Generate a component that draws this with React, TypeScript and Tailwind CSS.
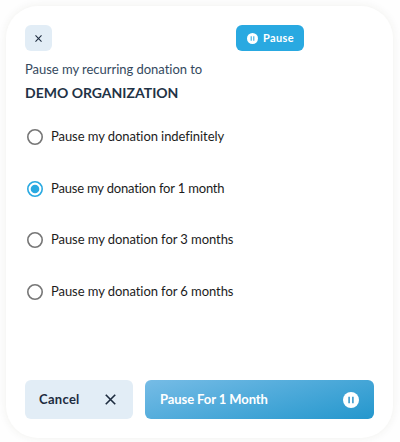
import { useState } from 'react';

import clsx from 'clsx';

type IconProps = {
  className?: string;
};

type PauseOption = {
  value: string;
  label: string;
  action: string;
  labelClass: string;
};

const options: PauseOption[] = [
  {
    value: 'indefinitely',
    label: 'Pause my donation indefinitely',
    action: 'Pause Indefinitely',
    labelClass: 'tracking-[-0.07px]',
  },
  { value: '1', label: 'Pause my donation for 1 month', action: 'Pause For 1 Month', labelClass: 'tracking-[-0.19px]' },
  { value: '3', label: 'Pause my donation for 3 months', action: 'Pause For 3 Months', labelClass: 'tracking-[-0.07px]' },
  { value: '6', label: 'Pause my donation for 6 months', action: 'Pause For 6 Months', labelClass: 'tracking-[-0.07px]' },
];

const CloseIcon = ({ className }: IconProps) => (
  <svg viewBox="0 0 10 10" fill="none" stroke="currentColor" strokeWidth="1.5" className={className}>
    <path d="M.7.7l8.6 8.6M9.3.7L.7 9.3" />
  </svg>
);

const PauseIcon = ({ className }: IconProps) => (
  <svg viewBox="0 0 16 16" className={className}>
    <circle cx="8" cy="8" r="8" fill="#fff" />
    <path d="M6.1 4.8v6.4M9.9 4.8v6.4" stroke="currentColor" strokeWidth="1.5" />
  </svg>
);

const RadioMark = ({ checked }: { checked: boolean }) => (
  <svg viewBox="0 0 16 16" fill="none" className={clsx('size-4', checked ? 'text-[#29a9e1]' : 'text-[#767676]')}>
    <circle cx="8" cy="8" r="7.2" stroke="currentColor" strokeWidth="1.6" />
    {checked && <circle cx="8" cy="8" r="4.3" fill="currentColor" />}
  </svg>
);

export default function App() {
  const [selected, setSelected] = useState('1');
  const current = options.find((option) => option.value === selected) ?? options[0];

  return (
    <main className="h-[442px] w-[400px] overflow-hidden bg-[#fefefe] pt-1.5 pl-1.5 font-['Lato',sans-serif] [font-variant-ligatures:none]">
      <section className="flex h-[432px] w-[387px] flex-col rounded-[32px] bg-white px-[19px] pt-[19px] pb-[19px] shadow-[0_0_10px_rgba(60,50,30,0.07)]">
        <header className="flex h-[26px] shrink-0">
          <button
            type="button"
            aria-label="Close"
            className="flex w-[26.5px] items-center justify-center rounded-md bg-[#e2edf6] text-[#1d2c3f]"
          >
            <CloseIcon className="size-[7px]" />
          </button>
          <button
            type="button"
            className="ml-[184.5px] flex w-[68px] items-center rounded-md bg-[#29a9e1] pl-[11px] text-[11px] font-bold text-white"
          >
            <PauseIcon className="mr-[5px] size-[11px] text-[#29a9e1]" />
            <span className="tracking-[0.35px]">Pause</span>
          </button>
        </header>

        <p className="mt-2 h-5 text-[13px] leading-5 tracking-[-0.03px] whitespace-nowrap text-[#34495e]">
          Pause my recurring donation to
        </p>
        <h1 className="mt-1 h-5 text-[14px] leading-5 font-bold whitespace-nowrap text-[#1f3346]">DEMO ORGANIZATION</h1>

        <div role="radiogroup" className="mt-6 flex flex-col gap-[31.5px]">
          {options.map(({ value, label, labelClass }) => (
            <label key={value} className="flex h-5 cursor-pointer items-center pl-[2px]">
              <input
                type="radio"
                name="pause"
                className="sr-only"
                checked={selected === value}
                onChange={() => setSelected(value)}
              />
              <RadioMark checked={selected === value} />
              <span className={clsx('ml-2 text-[13px] whitespace-nowrap text-[#1c1c1c]', labelClass)}>{label}</span>
            </label>
          ))}
        </div>

        <footer className="mt-auto flex h-[39px] gap-3">
          <button
            type="button"
            className="flex w-[108px] items-center justify-between rounded-md bg-[#e2edf6] pr-[17px] pl-[14px] text-[13px] font-bold text-[#1d2c3f]"
          >
            <span className="tracking-[0.3px]">Cancel</span>
            <CloseIcon className="size-[11px]" />
          </button>
          <button
            type="button"
            className="flex w-[229px] items-center justify-between rounded-md bg-linear-[165deg,#76bce6,#2497cd] pr-[15px] pl-[15px] text-[13px] font-bold text-white"
          >
            <span className="tracking-[-0.08px]">{current.action}</span>
            <PauseIcon className="size-4 text-[#2f94c9]" />
          </button>
        </footer>
      </section>
    </main>
  );
}
